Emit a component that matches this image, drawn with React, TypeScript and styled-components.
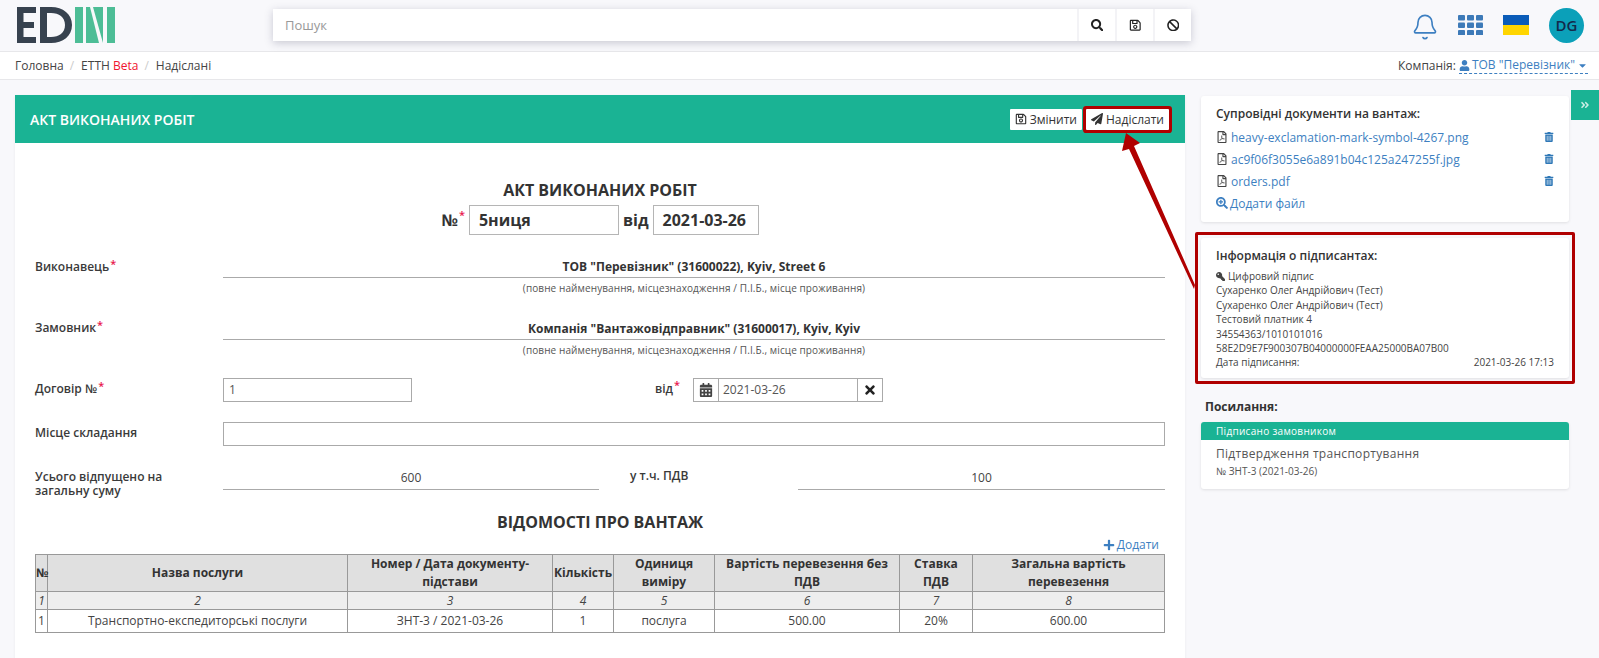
import { createGlobalStyle, styled } from "styled-components";
import {
  FaAngleDoubleRight,
  FaBan,
  FaCalendarAlt,
  FaCaretDown,
  FaKey,
  FaPaperPlane,
  FaPlus,
  FaRegFilePdf,
  FaRegSave,
  FaSearch,
  FaSearchPlus,
  FaTimes,
  FaTrashAlt,
  FaUser,
} from "react-icons/fa";
import { Bell } from "lucide-react";

const GlobalStyle = createGlobalStyle`
  * { box-sizing: border-box; }
  html, body { margin: 0; height: 658px; overflow: hidden; }
  body {
    background: #f8f8fb;
    color: #333;
    font-family: "Open Sans", "Noto Sans", sans-serif;
    font-size: 12px;
  }
`;

const Page = styled.div`
  position: relative;
  height: 658px;
  overflow: hidden;
`;

const Topbar = styled.header`
  display: flex;
  align-items: center;
  height: 52px;
  padding: 0 15px 1px 17px;
  border-bottom: 1px solid #e7e7ea;
`;

const Logo = styled.svg`
  display: block;
  width: 98px;
  height: 36px;
  flex: none;
`;

const SearchBox = styled.div`
  display: flex;
  width: 918px;
  height: 32px;
  margin-left: 158px;
  background: #f3f3f6;
  box-shadow: 0 2px 8px rgba(60, 60, 90, 0.25);
`;

const SearchInput = styled.div`
  flex: 1;
  padding-left: 12px;
  background: #fff;
  color: #999;
  font-size: 13px;
  line-height: 32px;
`;

const SearchButton = styled.div`
  display: flex;
  align-items: center;
  justify-content: center;
  width: 36px;
  margin-left: 2px;
  background: #fff;
  color: #222;
  font-size: 12.5px;
`;

const TopIcons = styled.div`
  display: flex;
  align-items: center;
  margin-left: auto;
`;

const BellIcon = styled(Bell)`
  display: block;
  width: 28px;
  height: 28px;
  margin-top: 3px;
  color: #3d7fc1;
`;

const AppsIcon = styled.svg`
  display: block;
  width: 25px;
  height: 20px;
  margin-left: 19px;
`;

const Flag = styled.svg`
  display: block;
  width: 26px;
  height: 20px;
  margin-left: 20px;
`;

const Avatar = styled.div`
  width: 35px;
  height: 35px;
  margin-left: 20px;
  border-radius: 50%;
  background: #0ba0b9;
  color: #13294b;
  font-size: 15px;
  font-weight: 600;
  line-height: 35px;
  text-align: center;
`;

const Crumbs = styled.nav`
  display: flex;
  align-items: center;
  height: 28px;
  padding: 0 11px 0 15px;
  background: #fff;
  border-bottom: 1px solid #e7e7ea;
`;

const Crumb = styled.span`
  color: #444;
`;

const CrumbSep = styled.span`
  margin: 0 7px 0 6px;
  color: #ccc;
`;

const Beta = styled.span`
  color: #f0142f;
`;

const CompanyLabel = styled.span`
  margin-left: auto;
  margin-right: 3px;
  color: #444;
`;

const CompanyLink = styled.span`
  display: flex;
  align-items: center;
  gap: 2px;
  color: #3d7fc1;
  border-bottom: 1px dashed #3d7fc1;
  line-height: 16px;
  svg { font-size: 11px; }
`;

const Columns = styled.main`
  display: grid;
  grid-template-columns: 1170px 368px;
  column-gap: 16px;
  padding: 15px 0 0 15px;
`;

const DocCard = styled.section`
  background: #fff;
  box-shadow: 0 1px 3px rgba(0, 0, 0, 0.06);
  min-height: 620px;
`;

const DocHeader = styled.div`
  display: flex;
  align-items: center;
  height: 48px;
  padding: 0 16px 0 15px;
  background: #1ab394;
  color: #fff;
`;

const DocHeaderTitle = styled.h1`
  margin: 0;
  margin-right: auto;
  font-size: 14px;
  font-weight: 600;
`;

const HeaderButton = styled.button<{ $marked?: boolean }>`
  display: flex;
  align-items: center;
  gap: 3px;
  height: 21px;
  margin-left: 4px;
  padding: 0 5px;
  border: 0;
  border-radius: 1px;
  background: #fff;
  color: #333;
  font: inherit;
  box-shadow: ${(props) => (props.$marked ? "0 0 0 3px #b00000" : "none")};
`;

const DocBody = styled.div`
  padding: 36px 20px 0;
`;

const DocTitle = styled.h2`
  margin: 0;
  font-size: 16px;
  font-weight: 700;
  line-height: 22px;
  text-align: center;
`;

const NumberRow = styled.div`
  display: flex;
  justify-content: center;
  align-items: center;
  gap: 4px;
  margin: 4px 0 22px;
  font-size: 16px;
  font-weight: 700;
`;

const NumberLabel = styled.span`
  display: flex;
`;

const Required = styled.sup`
  color: #e8174d;
  font-size: 11px;
  font-weight: 600;
  line-height: 0;
  position: relative;
  top: 6px;
  margin-left: 1px;
`;

const NumberBox = styled.div<{ $width: number }>`
  width: ${(props) => props.$width}px;
  height: 30px;
  padding-left: 9px;
  border: 1px solid #b5b5b5;
  line-height: 28px;
`;

const FieldRow = styled.div<{ $gap?: number }>`
  display: grid;
  grid-template-columns: 188px 1fr;
  margin-bottom: ${(props) => props.$gap ?? 20}px;
`;

const FieldLabel = styled.label<{ $offset?: number }>`
  display: flex;
  padding-top: ${(props) => props.$offset ?? 0}px;
  font-weight: 600;
  color: #3a3a3a;
`;

const PartyValue = styled.div`
  height: 21px;
  border-bottom: 1px solid #aaa;
  font-weight: 700;
  line-height: 20px;
  text-align: center;
`;

const Hint = styled.div`
  color: #555;
  font-size: 10px;
  letter-spacing: 0.1px;
  line-height: 20px;
  text-align: center;
`;

const TextInput = styled.div<{ $width?: number }>`
  width: ${(props) => (props.$width ? `${props.$width}px` : "100%")};
  height: 24px;
  padding-left: 5px;
  border: 1px solid #aaa;
  color: #555;
  line-height: 22px;
`;

const InlineFields = styled.div`
  display: flex;
  align-items: flex-start;
`;

const InlineLabel = styled(FieldLabel)`
  width: 38px;
  margin-left: 243px;
  line-height: 20px;
`;

const DateGroup = styled.div`
  display: grid;
  grid-template-columns: 25px 1fr 25px;
  width: 190px;
  height: 24px;
  border: 1px solid #aaa;
  color: #555;
  line-height: 22px;
`;

const DateAddon = styled.div<{ $dark?: boolean }>`
  display: flex;
  align-items: center;
  justify-content: center;
  color: ${(props) => (props.$dark ? "#222" : "#444")};
  font-size: 14px;
  &:first-child { border-right: 1px solid #aaa; }
  &:last-child { border-left: 1px solid #aaa; }
`;

const DateValue = styled.div`
  padding-left: 4px;
`;

const AmountRow = styled.div`
  display: grid;
  grid-template-columns: 188px 376px 199px 1fr;
  margin-bottom: 14px;
`;

const AmountLabel = styled(FieldLabel)`
  display: block;
  padding-top: 4px;
  line-height: 13.5px;
`;

const TaxLabel = styled(FieldLabel)`
  padding: 1px 0 0 31px;
  line-height: 18px;
`;

const AmountValue = styled.div`
  height: 24px;
  border-bottom: 1px solid #aaa;
  color: #444;
  line-height: 23px;
  text-align: center;
`;

const AddRow = styled.div`
  display: flex;
  justify-content: flex-end;
  align-items: center;
  gap: 2px;
  height: 21px;
  padding: 2px 6px 0 0;
  color: #3d7fc1;
`;

const GoodsTable = styled.table`
  width: 1129px;
  border-collapse: collapse;
  table-layout: fixed;
  border: 1px solid #999;
  td, th {
    border: 1px solid #999;
    padding: 0;
    text-align: center;
  }
`;

const HeadCell = styled.th`
  height: 36px;
  background: #e0e0e0;
  color: #333;
  font-weight: 700;
  line-height: 18px;
`;

const IndexCell = styled.td`
  height: 18px;
  background: #eee;
  color: #444;
  font-style: italic;
  line-height: 17px;
`;

const DataCell = styled.td`
  height: 23px;
  color: #444;
  line-height: 22px;
`;

const Sidebar = styled.aside`
  display: flex;
  flex-direction: column;
  padding-top: 1px;
`;

const SideCard = styled.section`
  padding: 10px 15px 8px;
  border-radius: 3px;
  background: #fff;
  box-shadow: 0 1px 3px rgba(0, 0, 0, 0.1);
`;

const Highlight = styled.div`
  margin: 10px -6px 0;
  padding: 3px;
  border: 3px solid #b00000;
  border-radius: 2px;
`;

const SideTitle = styled.h3`
  margin: 0;
  color: #333;
  font-size: 12px;
  font-weight: 600;
  line-height: 16px;
`;

const FileList = styled.ul`
  margin: 4px 0 0;
  padding: 0;
  list-style: none;
`;

const FileRow = styled.li`
  display: flex;
  align-items: center;
  height: 22px;
  color: #3d7fc1;
`;

const FileIcon = styled(FaRegFilePdf)`
  margin-right: 3px;
  color: #444;
  font-size: 12px;
`;

const TrashIcon = styled(FaTrashAlt)`
  margin: 0 0 0 auto;
  color: #2f78b7;
  font-size: 10px;
`;

const AddFile = styled.div`
  display: flex;
  align-items: center;
  gap: 2px;
  height: 22px;
  color: #3d7fc1;
`;

const SignLines = styled.div`
  margin-top: 5px;
  color: #444;
  font-size: 10px;
  line-height: 14.4px;
`;

const SignRow = styled.div`
  display: flex;
  align-items: center;
  gap: 3px;
`;

const KeyIcon = styled(FaKey)`
  font-size: 9px;
  transform: scaleX(-1);
`;

const SignDate = styled.span`
  margin-left: auto;
`;

const LinksTitle = styled.h3`
  margin: 15px 0 7px 4px;
  color: #333;
  font-size: 12px;
  font-weight: 700;
  line-height: 16px;
`;

const LinkCard = styled.section`
  height: 67px;
  border-radius: 3px;
  background: #fff;
  box-shadow: 0 1px 3px rgba(0, 0, 0, 0.1);
  overflow: hidden;
`;

const LinkBadge = styled.div`
  height: 18px;
  padding-left: 15px;
  background: #1ab394;
  color: #fff;
  font-size: 10px;
  letter-spacing: 0.3px;
  line-height: 18px;
`;

const LinkName = styled.div`
  padding: 5px 15px 0;
  color: #555;
  font-size: 12px;
  letter-spacing: 0.3px;
  line-height: 18px;
`;

const LinkMeta = styled.div`
  padding: 1px 15px 0;
  color: #555;
  font-size: 10px;
  line-height: 14px;
`;

const CollapseTab = styled.div`
  position: absolute;
  top: 90px;
  right: 0;
  display: flex;
  align-items: center;
  justify-content: center;
  width: 28px;
  height: 30px;
  background: #1ab394;
  color: #cdeee6;
  font-size: 10px;
`;

const ArrowLayer = styled.svg`
  position: absolute;
  top: 0;
  left: 0;
  width: 1599px;
  height: 658px;
  pointer-events: none;
`;

const columns = [12, 300, 205, 61, 101, 185, 73, 192];
const headings = [
  "№",
  "Назва послуги",
  "Номер / Дата документу-підстави",
  "Кількість",
  "Одиниця виміру",
  "Вартість перевезення без ПДВ",
  "Ставка ПДВ",
  "Загальна вартість перевезення",
];
const rowData = [
  "1",
  "Транспортно-експедиторські послуги",
  "ЗНТ-3 / 2021-03-26",
  "1",
  "послуга",
  "500.00",
  "20%",
  "600.00",
];
const files = [
  "heavy-exclamation-mark-symbol-4267.png",
  "ac9f06f3055e6a891b04c125a247255f.jpg",
  "orders.pdf",
];
const partyHint = "(повне найменування, місцезнаходження / П.І.Б., місце проживання)";

function App() {
  return (
    <Page>
      <GlobalStyle />
      <Topbar>
        <Logo viewBox="0 0 98 36">
          <path
            fill="#37424f"
            d="M0 0h19v6H6.5v9H17v6H6.5v9H19v6H0zM23 0h11c12 0 21 7 21 18s-9 18-21 18H23zm7 6v24h4c8 0 14-4 14-12S42 6 34 6z"
          />
          <path
            fill="#4dbd96"
            d="M58 0h8v36h-8zM69 0h4l9 36H69zM76 0h10v36zM90 0h8v36h-8z"
          />
        </Logo>
        <SearchBox>
          <SearchInput>Пошук</SearchInput>
          <SearchButton>
            <FaSearch />
          </SearchButton>
          <SearchButton>
            <FaRegSave />
          </SearchButton>
          <SearchButton>
            <FaBan />
          </SearchButton>
        </SearchBox>
        <TopIcons>
          <BellIcon strokeWidth={1.4} />
          <AppsIcon viewBox="0 0 25 20">
            <g fill="#3d7ab8">
              {[0, 7.5, 15].map((y) =>
                [0, 9, 18].map((x) => (
                  <rect key={`${x}-${y}`} x={x} y={y} width="7" height="5.5" rx="1" />
                ))
              )}
            </g>
          </AppsIcon>
          <Flag viewBox="0 0 26 20">
            <rect width="26" height="10" fill="#0b5cb8" />
            <rect y="10" width="26" height="10" fill="#ffd500" />
          </Flag>
          <Avatar>DG</Avatar>
        </TopIcons>
      </Topbar>

      <Crumbs>
        <Crumb>Головна</Crumb>
        <CrumbSep>/</CrumbSep>
        <Crumb>
          ЕТТН <Beta>Beta</Beta>
        </Crumb>
        <CrumbSep>/</CrumbSep>
        <Crumb>Надіслані</Crumb>
        <CompanyLabel>Компанія:</CompanyLabel>
        <CompanyLink>
          <FaUser />
          ТОВ "Перевізник"
          <FaCaretDown />
        </CompanyLink>
      </Crumbs>

      <Columns>
        <DocCard>
          <DocHeader>
            <DocHeaderTitle>АКТ ВИКОНАНИХ РОБІТ</DocHeaderTitle>
            <HeaderButton>
              <FaRegSave />
              Змінити
            </HeaderButton>
            <HeaderButton $marked>
              <FaPaperPlane />
              Надіслати
            </HeaderButton>
          </DocHeader>
          <DocBody>
            <DocTitle>АКТ ВИКОНАНИХ РОБІТ</DocTitle>
            <NumberRow>
              <NumberLabel>
                №<Required>*</Required>
              </NumberLabel>
              <NumberBox $width={150}>5ниця</NumberBox>
              <span>від</span>
              <NumberBox $width={106}>2021-03-26</NumberBox>
            </NumberRow>

            <FieldRow $gap={21}>
              <FieldLabel $offset={1}>
                Виконавець<Required>*</Required>
              </FieldLabel>
              <div>
                <PartyValue>ТОВ "Перевізник" (31600022), Kyiv, Street 6</PartyValue>
                <Hint>{partyHint}</Hint>
              </div>
            </FieldRow>
            <FieldRow $gap={18}>
              <FieldLabel>
                Замовник<Required>*</Required>
              </FieldLabel>
              <div>
                <PartyValue>Компанія "Вантажовідправник" (31600017), Kyiv, Kyiv</PartyValue>
                <Hint>{partyHint}</Hint>
              </div>
            </FieldRow>
            <FieldRow>
              <FieldLabel $offset={2}>
                Договір №<Required>*</Required>
              </FieldLabel>
              <InlineFields>
                <TextInput $width={189}>1</TextInput>
                <InlineLabel $offset={1}>
                  від<Required>*</Required>
                </InlineLabel>
                <DateGroup>
                  <DateAddon>
                    <FaCalendarAlt />
                  </DateAddon>
                  <DateValue>2021-03-26</DateValue>
                  <DateAddon $dark>
                    <FaTimes />
                  </DateAddon>
                </DateGroup>
              </InlineFields>
            </FieldRow>
            <FieldRow>
              <FieldLabel $offset={2}>Місце складання</FieldLabel>
              <TextInput />
            </FieldRow>
            <AmountRow>
              <AmountLabel>
                Усього відпущено на
                <br />
                загальну суму
              </AmountLabel>
              <AmountValue>600</AmountValue>
              <TaxLabel>у т.ч. ПДВ</TaxLabel>
              <AmountValue>100</AmountValue>
            </AmountRow>

            <DocTitle>ВІДОМОСТІ ПРО ВАНТАЖ</DocTitle>
            <AddRow>
              <FaPlus />
              Додати
            </AddRow>
            <GoodsTable>
              <colgroup>
                {columns.map((width, index) => (
                  <col key={index} width={width} />
                ))}
              </colgroup>
              <thead>
                <tr>
                  {headings.map((heading) => (
                    <HeadCell key={heading}>{heading}</HeadCell>
                  ))}
                </tr>
              </thead>
              <tbody>
                <tr>
                  {columns.map((_, index) => (
                    <IndexCell key={index}>{index + 1}</IndexCell>
                  ))}
                </tr>
                <tr>
                  {rowData.map((value, index) => (
                    <DataCell key={index}>{value}</DataCell>
                  ))}
                </tr>
              </tbody>
            </GoodsTable>
          </DocBody>
        </DocCard>

        <Sidebar>
          <SideCard>
            <SideTitle>Супровідні документи на вантаж:</SideTitle>
            <FileList>
              {files.map((file) => (
                <FileRow key={file}>
                  <FileIcon />
                  {file}
                  <TrashIcon />
                </FileRow>
              ))}
            </FileList>
            <AddFile>
              <FaSearchPlus />
              Додати файл
            </AddFile>
          </SideCard>

          <Highlight>
            <SideCard>
              <SideTitle>Інформація о підписантах:</SideTitle>
              <SignLines>
                <SignRow>
                  <KeyIcon />
                  Цифровий підпис
                </SignRow>
                <div>Сухаренко Олег Андрійович (Тест)</div>
                <div>Сухаренко Олег Андрійович (Тест)</div>
                <div>Тестовий платник 4</div>
                <div>34554363/1010101016</div>
                <div>58E2D9E7F900307B04000000FEAA25000BA07B00</div>
                <SignRow>
                  Дата підписання:
                  <SignDate>2021-03-26 17:13</SignDate>
                </SignRow>
              </SignLines>
            </SideCard>
          </Highlight>

          <LinksTitle>Посилання:</LinksTitle>
          <LinkCard>
            <LinkBadge>Підписано замовником</LinkBadge>
            <LinkName>Підтвердження транспортування</LinkName>
            <LinkMeta>№ ЗНТ-3 (2021-03-26)</LinkMeta>
          </LinkCard>
        </Sidebar>
      </Columns>

      <CollapseTab>
        <FaAngleDoubleRight />
      </CollapseTab>

      <ArrowLayer viewBox="0 0 1599 658">
        <polygon
          fill="#b00000"
          points="1126,133 1140,143 1134,146 1195,285 1194,289 1129,149 1122,151"
        />
      </ArrowLayer>
    </Page>
  );
}

export default App;
